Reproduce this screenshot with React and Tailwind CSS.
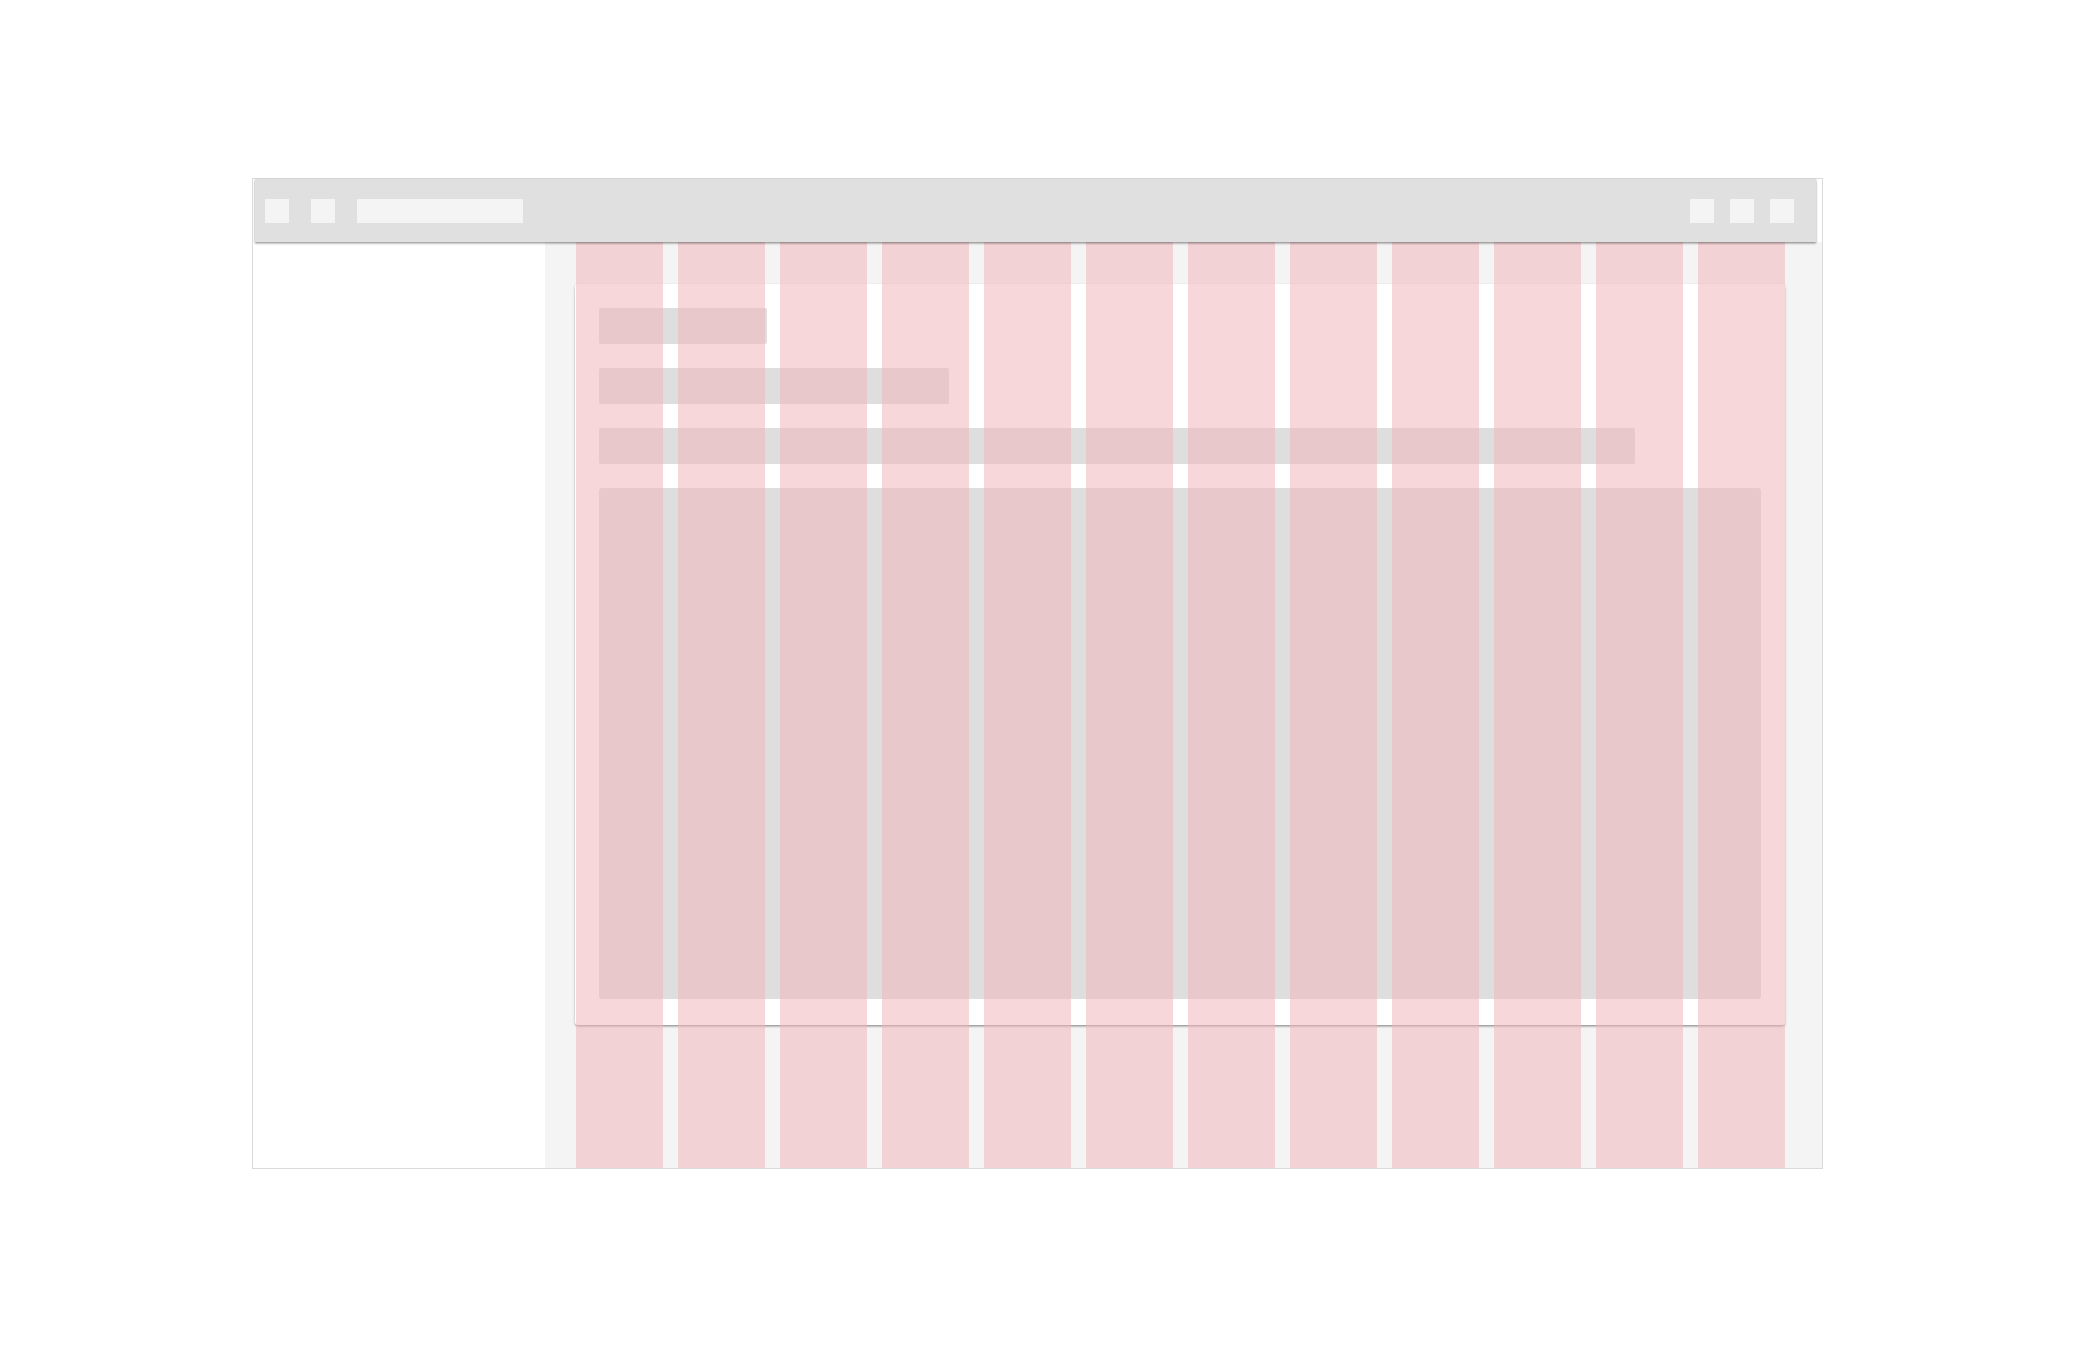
import React from "react";

const cols = Array.from({ length: 12 }, (_, i) => i);

export default function App() {
  return (
    <div className="min-h-screen w-full bg-white pt-[178px] pl-[252px] font-['Liberation_Sans',sans-serif]">
      <div className="flex h-[991px] w-[1571px] flex-col border border-[#dadada] bg-white">
        {/* toolbar */}
        <div className="relative z-10 ml-[2px] mr-[6px] flex h-[63px] shrink-0 items-center bg-[#e0e0e0] pl-[10px] pr-[22px] shadow-[0_1px_2px_rgba(0,0,0,0.35),0_2px_2px_rgba(0,0,0,0.12)]">
          <div className="h-6 w-6 bg-[#f4f4f4]" />
          <div className="ml-[22px] h-6 w-6 bg-[#f4f4f4]" />
          <div className="ml-[22px] h-6 w-[166px] bg-[#f4f4f4]" />
          <div className="flex-1" />
          <div className="flex gap-4">
            <div className="h-6 w-6 bg-[#f4f4f4]" />
            <div className="h-6 w-6 bg-[#f4f4f4]" />
            <div className="h-6 w-6 bg-[#f4f4f4]" />
          </div>
        </div>
        {/* body */}
        <div className="flex flex-1">
          <div className="w-[292px] shrink-0 bg-white" />
          <div className="relative flex-1 bg-[#f4f4f4] pl-[30px] pt-[42px]">
            <div className="flex w-[1210px] flex-col gap-6 rounded-[3px] bg-white px-6 pt-6 pb-[26px] shadow-[0_1px_3px_rgba(0,0,0,0.2),0_2px_2px_rgba(0,0,0,0.14),0_3px_1px_-2px_rgba(0,0,0,0.12)]">
              <div className="h-9 w-[168px] rounded-[2px] bg-[#dedede]" />
              <div className="h-9 w-[350px] rounded-[2px] bg-[#dedede]" />
              <div className="h-9 w-[1036px] rounded-[2px] bg-[#dedede]" />
              <div className="h-[511px] w-full rounded-[3px] bg-[#dedede]" />
            </div>
            {/* column grid overlay */}
            <div className="pointer-events-none absolute inset-y-0 left-[31px] grid w-[1209px] grid-cols-12 gap-x-[15px]">
              {cols.map((c) => (
                <div key={c} className="h-full bg-[rgba(240,183,187,0.55)]" />
              ))}
            </div>
          </div>
        </div>
      </div>
    </div>
  );
}
